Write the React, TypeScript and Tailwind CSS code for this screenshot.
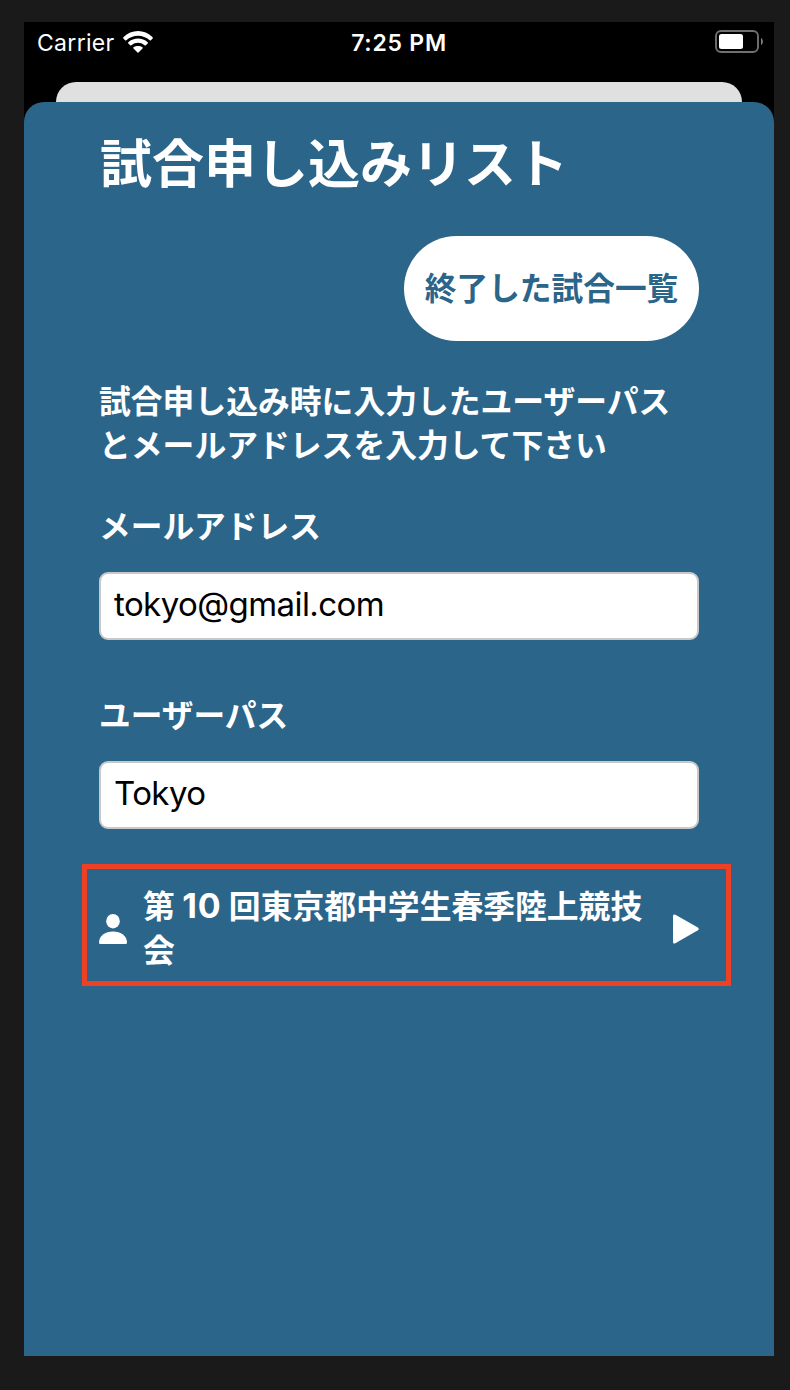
function WifiIcon() {
  return (
    <svg className="mt-[3px]" width="30" height="22" viewBox="0 0 30 22" fill="white">
      <path d="M.4 6.300C8.500-2 21.500-2 29.600 6.300Q30.100 7 29.600 7.500L27.900 9.200Q27.300 9.700 26.700 9.200C20 3.200 10 3.200 3.300 9.200Q2.700 9.700 2.100 9.200L.4 7.500Q-.1 7 .4 6.300Z" />
      <path d="M5.300 11.200C10.800 6.300 19.200 6.300 24.700 11.200Q25.200 11.800 24.700 12.400L22.800 14.300Q22.200 14.700 21.600 14.300C17.800 11 12.200 11 8.400 14.300Q7.800 14.700 7.200 14.300L5.300 12.400Q4.800 11.800 5.300 11.200Z" />
      <path d="M10.500 16.300C13 14.400 17 14.400 19.500 16.300Q20.100 16.800 19.500 17.400L15.500 21.400Q15 21.900 14.500 21.400L10.500 17.400Q9.900 16.800 10.500 16.300Z" />
    </svg>
  );
}

function BatteryIcon() {
  return (
    <svg className="mt-[2px]" width="48" height="23" viewBox="0 0 48 23" fill="none">
      <rect x="1" y="1" width="42" height="21" rx="5" stroke="#707070" strokeWidth="1.900" />
      <rect x="4" y="4" width="24" height="15" rx="2.500" fill="white" />
      <path d="M46 8c2.500 1 2.500 6 0 7Z" fill="#808080" />
    </svg>
  );
}

function Field({ label, value }: { label: string; value: string }) {
  return (
    <div className="flex flex-col">
      <label className="text-[31.7px] leading-[44px]">{label}</label>
      <div className="mt-[23px] h-[68px] rounded-[9px] border-2 border-[#c8c8c8] bg-white px-[13px] text-[33px] leading-[60px] font-normal tracking-[-0.57px] text-black">
        {value}
      </div>
    </div>
  );
}

export default function App() {
  return (
    <div className="flex h-[1390px] w-[790px] flex-col bg-[#1a1a1a] pt-[22px] pl-6 font-['Inter','Noto_Sans_CJK_JP',sans-serif] text-white">
      <div className="flex h-[1334px] w-[750px] flex-col bg-black">
        <header className="grid h-[60px] grid-cols-[1fr_auto_1fr] pr-[11px] pl-[13px] pt-[6px] text-[23px] leading-[30px]">
          <div className="flex gap-2">
            <span className="tracking-[0.3px]">Carrier</span>
            <WifiIcon />
          </div>
          <div className="pr-[2px] text-center font-semibold tracking-[0.75px]">7:25 PM</div>
          <div className="flex justify-end">
            <BatteryIcon />
          </div>
        </header>
        <div className="mx-8 h-5 rounded-t-[20px] bg-[#e0e0e0]" />
        <main className="flex flex-1 flex-col rounded-t-[20px] bg-[#2b658a] px-[75px] pt-[30px] font-bold">
          <h1 className="h-[104px] pl-px text-[52px] leading-[66px] whitespace-nowrap">試合申し込みリスト</h1>
          <button className="h-[105px] w-[295px] self-end rounded-full bg-white text-[31.7px] whitespace-nowrap text-[#2b658a]">
            終了した試合一覧
          </button>
          <p className="mt-[39px] mb-[37px] text-[31.8px] leading-[44px] whitespace-nowrap">
            試合申し込み時に入力したユーザーパス
            <br />
            とメールアドレスを入力して下さい
          </p>
          <div className="flex flex-col gap-[54px]">
            <Field label="メールアドレス" value="tokyo@gmail.com" />
            <Field label="ユーザーパス" value="Tokyo" />
          </div>
          <div className="mt-[35px] -mr-8 -ml-[17px] flex h-[122px] items-center border-[5px] border-[#ee4025] pt-[7px] pr-[27px] pl-3">
            <svg width="28" height="30" viewBox="0 0 28 30" fill="white">
              <ellipse cx="14" cy="7.200" rx="6.800" ry="7.200" />
              <path d="M1.500 30Q0 30 0 28.500C0 22 6 17.500 14 17.500S28 22 28 28.500Q28 30 26.500 30Z" />
            </svg>
            <p className="ml-4 flex-1 text-[31.8px] leading-[44px] whitespace-nowrap">
              第 <span className="text-[34px] leading-none tracking-[0.7px]">10</span> 回東京都中学生春季陸上競技
              <br />会
            </p>
            <svg className="mt-px" width="26" height="30" viewBox="0 0 26 30" fill="white">
              <path d="M0 2Q0-.4 2.400.8L24.900 13.600Q26.500 14.900 24.900 16.200L2.400 29.200Q0 30.400 0 28Z" />
            </svg>
          </div>
        </main>
      </div>
    </div>
  );
}
